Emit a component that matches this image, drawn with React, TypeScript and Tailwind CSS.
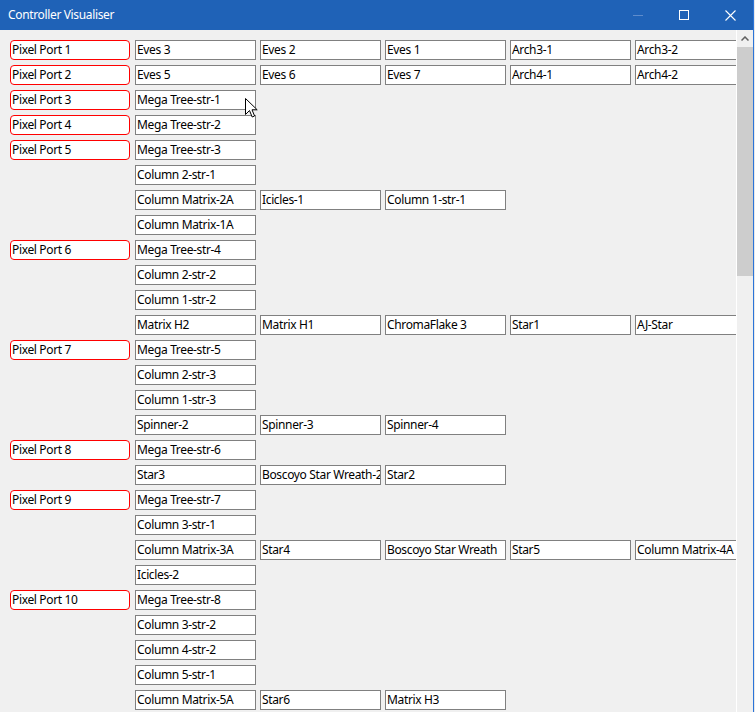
import React from 'react'

type Row = { port?: string; models: string[] }

const rows: Row[] = [
  { port: 'Pixel Port 1', models: ['Eves 3', 'Eves 2', 'Eves 1', 'Arch3-1', 'Arch3-2'] },
  { port: 'Pixel Port 2', models: ['Eves 5', 'Eves 6', 'Eves 7', 'Arch4-1', 'Arch4-2'] },
  { port: 'Pixel Port 3', models: ['Mega Tree-str-1'] },
  { port: 'Pixel Port 4', models: ['Mega Tree-str-2'] },
  { port: 'Pixel Port 5', models: ['Mega Tree-str-3'] },
  { models: ['Column 2-str-1'] },
  { models: ['Column Matrix-2A', 'Icicles-1', 'Column 1-str-1'] },
  { models: ['Column Matrix-1A'] },
  { port: 'Pixel Port 6', models: ['Mega Tree-str-4'] },
  { models: ['Column 2-str-2'] },
  { models: ['Column 1-str-2'] },
  { models: ['Matrix H2', 'Matrix H1', 'ChromaFlake 3', 'Star1', 'AJ-Star'] },
  { port: 'Pixel Port 7', models: ['Mega Tree-str-5'] },
  { models: ['Column 2-str-3'] },
  { models: ['Column 1-str-3'] },
  { models: ['Spinner-2', 'Spinner-3', 'Spinner-4'] },
  { port: 'Pixel Port 8', models: ['Mega Tree-str-6'] },
  { models: ['Star3', 'Boscoyo Star Wreath-2', 'Star2'] },
  { port: 'Pixel Port 9', models: ['Mega Tree-str-7'] },
  { models: ['Column 3-str-1'] },
  { models: ['Column Matrix-3A', 'Star4', 'Boscoyo Star Wreath', 'Star5', 'Column Matrix-4A'] },
  { models: ['Icicles-2'] },
  { port: 'Pixel Port 10', models: ['Mega Tree-str-8'] },
  { models: ['Column 3-str-2'] },
  { models: ['Column 4-str-2'] },
  { models: ['Column 5-str-1'] },
  { models: ['Column Matrix-5A', 'Star6', 'Matrix H3'] },
]

function Cursor() {
  return (
    <svg className="absolute left-[245px] top-[98px]" width="13" height="21" viewBox="0 0 13 21">
      <path d="M0.5 0.5 L0.5 16.5 L4.5 12.5 L7.2 19 L9.6 18 L7 11.8 L12.2 11.8 Z" fill="white" stroke="black" strokeWidth="1" strokeLinejoin="miter" />
    </svg>
  )
}

export default function App() {
  return (
    <div className="w-[755px] h-[712px] bg-[#f0f0f0] flex overflow-hidden tracking-[-0.35px]" style={{ fontFamily: '"Noto Sans", "Open Sans", sans-serif' }}>
      <div className="w-[754px] h-full flex flex-col border-r border-[#2b74d8] relative">
        <div className="h-[30px] shrink-0 bg-[#1f62b7] flex items-center pl-[8px] text-white text-[12px]">
          <span className="flex-1 -mt-[1px]">Controller Visualiser</span>
          <div className="flex items-center h-full">
            <div className="w-[46px] h-full flex items-center justify-center">
              <div className="w-[10px] h-px bg-[#5e8ccc]" />
            </div>
            <div className="w-[46px] h-full flex items-center justify-center">
              <div className="w-[10px] h-[10px] border border-white" />
            </div>
            <div className="w-[46px] h-full flex items-center justify-center">
              <svg width="11" height="11" viewBox="0 0 11 11">
                <path d="M0.5 0.5 L10.5 10.5 M10.5 0.5 L0.5 10.5" stroke="white" strokeWidth="1.1" />
              </svg>
            </div>
          </div>
        </div>
        <div className="flex-1 flex min-h-0">
          <div className="flex-1 overflow-hidden pt-[10px] pl-[10px] text-[12px] text-black">
            {rows.map((r, i) => (
              <div key={i} className="flex h-[20px] mb-[5px] w-max">
                {r.port ? (
                  <div className="w-[120px] h-[20px] border border-[#ff0000] rounded-[4px] bg-white pl-[1px] leading-[18px] whitespace-nowrap overflow-hidden">
                    {r.port}
                  </div>
                ) : (
                  <div className="w-[120px]" />
                )}
                <div className="flex gap-[4px] ml-[5px]">
                  {r.models.map((m, j) => (
                    <div key={j} className="w-[121px] h-[20px] border border-[#808080] bg-white pl-[1px] leading-[18px] whitespace-nowrap overflow-hidden">
                      {m}
                    </div>
                  ))}
                </div>
              </div>
            ))}
          </div>
          <div className="w-[1px] bg-white" />
          <div className="w-[16px] bg-[#f0f0f0] flex flex-col">
            <div className="h-[17px] flex items-center justify-center">
              <svg width="8" height="5" viewBox="0 0 8 5">
                <path d="M0.5 4.5 L4 1 L7.5 4.5" fill="none" stroke="#606060" strokeWidth="1.5" />
              </svg>
            </div>
            <div className="h-[229px] bg-[#cdcdcd]" />
          </div>
        </div>
        <Cursor />
      </div>
      <div className="flex-1 bg-[#e8e8e8]" />
    </div>
  )
}
